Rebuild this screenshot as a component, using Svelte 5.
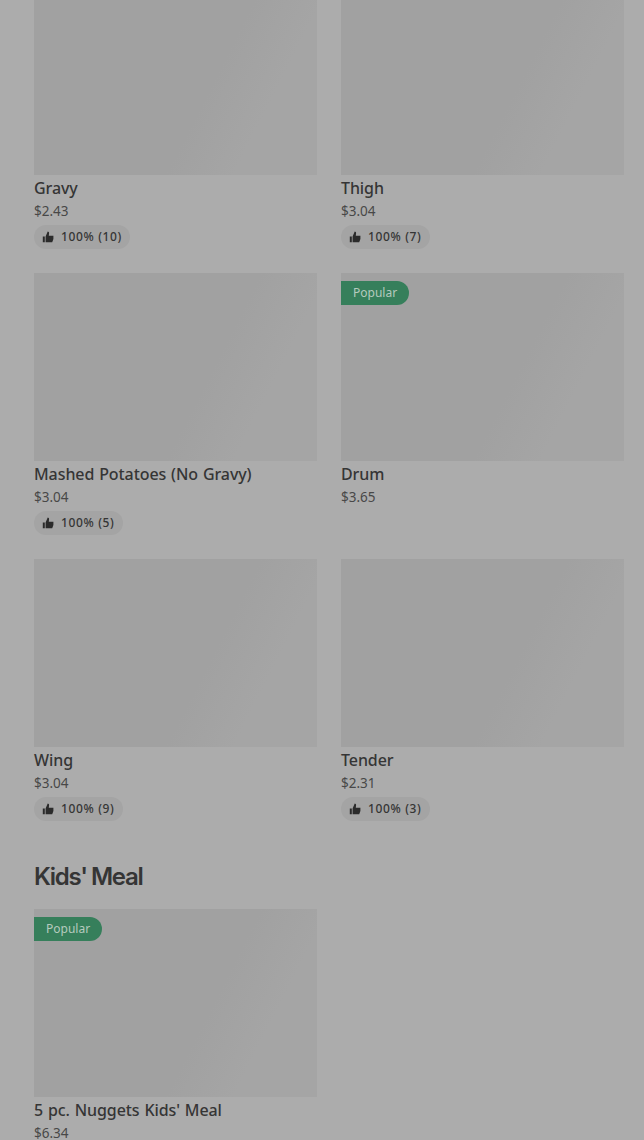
<script>
  const sections = [
    {
      title: '',
      items: [
        { name: 'Gravy', price: '$2.43', rating: '100% (10)' },
        { name: 'Thigh', price: '$3.04', rating: '100% (7)' },
        { name: 'Mashed Potatoes (No Gravy)', price: '$3.04', rating: '100% (5)' },
        { name: 'Drum', price: '$3.65', popular: true },
        { name: 'Wing', price: '$3.04', rating: '100% (9)' },
        { name: 'Tender', price: '$2.31', rating: '100% (3)' }
      ]
    },
    {
      title: "Kids' Meal",
      items: [{ name: "5 pc. Nuggets Kids' Meal", price: '$6.34', popular: true }]
    }
  ];
</script>

<main>
  {#each sections as section}
    <section>
      {#if section.title}<h2>{section.title}</h2>{/if}
      <div class="grid">
        {#each section.items as item}
          <article>
            <div class="photo">
              {#if item.popular}<span class="badge">Popular</span>{/if}
            </div>
            <h3>{item.name}</h3>
            <p>{item.price}</p>
            {#if item.rating}
              <div class="rating">
                <svg width="12" height="12" viewBox="0 0 12 12" aria-hidden="true">
                  <path d="M0.8 5.5H2.8V11.3H0.8ZM3.6 5.5L5.7 0.6Q7.3 0.6 7.1 2.1L6.8 4.8H11.4V8L10.2 11.3H3.6Z" />
                </svg>
                <span>{item.rating}</span>
              </div>
            {/if}
          </article>
        {/each}
      </div>
    </section>
  {/each}
</main>

<style>
  :global(body) {
    background: #acacac;
    overflow: hidden;
  }
  main {
    box-sizing: border-box;
    height: 1140px;
    overflow: hidden;
    padding: 0 20px 0 34px;
    background: #acacac;
    color: #353535;
    font-family: "Noto Sans", sans-serif;
  }
  .grid {
    display: grid;
    grid-template-columns: 283px 283px;
    grid-auto-rows: 262px;
    gap: 24px;
  }
  section:first-child {
    margin-top: -13px;
  }
  .photo {
    height: 188px;
    padding-top: 8px;
    box-sizing: border-box;
    background: linear-gradient(117deg, #a1a1a1 0%, #a1a1a1 60%, #a5a5a5 78%, #a5a5a5 100%);
  }
  .badge {
    display: block;
    box-sizing: border-box;
    width: 68px;
    height: 24px;
    padding-left: 12px;
    border-radius: 0 12px 12px 0;
    background: #367f5b;
    color: #b5cabe;
    font-size: 12px;
    line-height: 24px;
    white-space: nowrap;
  }
  h2 {
    height: 32px;
    margin: 40px 0 16px;
    font: 600 24px/32px Inter, sans-serif;
    letter-spacing: -1.3px;
    word-spacing: -0.5px;
  }
  h3 {
    margin: 0;
    font-size: 16px;
    line-height: 26px;
    font-weight: 500;
    letter-spacing: -0.08px;
    word-spacing: 0.8px;
    white-space: nowrap;
  }
  p {
    margin: 0;
    color: #484848;
    font-size: 13.5px;
    line-height: 20px;
    letter-spacing: 0;
  }
  .rating {
    display: inline-flex;
    align-items: center;
    gap: 7px;
    box-sizing: border-box;
    height: 24px;
    margin-top: 4px;
    padding: 0 8px;
    border-radius: 12px;
    background: #a4a4a4;
    font-size: 12px;
    font-weight: 500;
    line-height: 24px;
    letter-spacing: 0.65px;
  }
  svg {
    fill: #2b2b2b;
  }
</style>
